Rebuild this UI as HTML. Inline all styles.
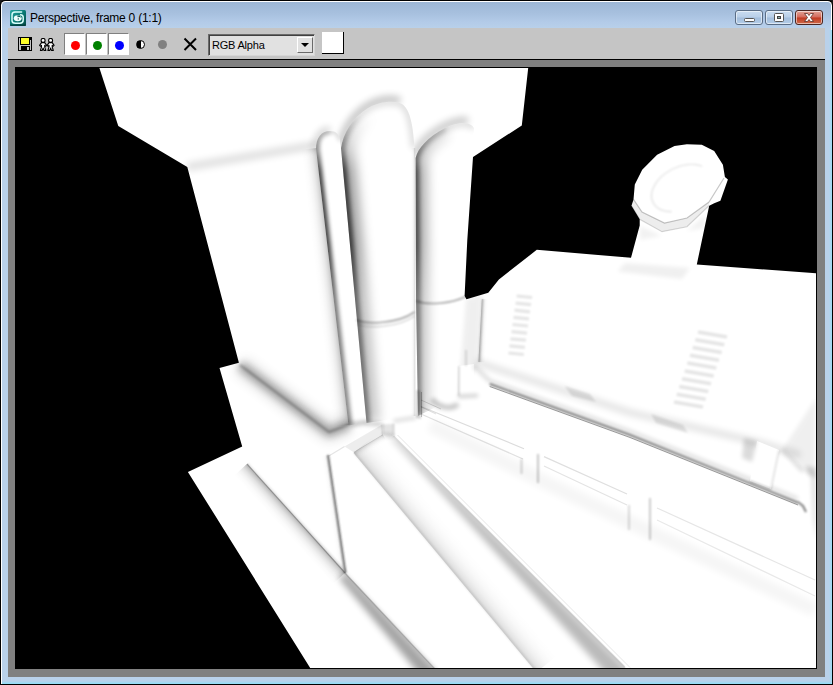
<!DOCTYPE html>
<html>
<head>
<meta charset="utf-8">
<title>Perspective, frame 0 (1:1)</title>
<style>
html,body{margin:0;padding:0;}
body{width:833px;height:685px;overflow:hidden;position:relative;background:#1a1a1a;font-family:"Liberation Sans",sans-serif;}
#win{position:absolute;left:0;top:0;width:833px;height:685px;background:#000;border-radius:5px 5px 1px 1px;overflow:hidden;}
#frame{position:absolute;left:1px;top:1px;width:831px;height:683px;background:#fff;border-radius:4.5px 4.5px 0 0;}
#glass{position:absolute;left:2px;top:2px;width:829px;height:681px;border-radius:3.5px 3.5px 0 0;
  background:linear-gradient(to bottom,#9db7d6 0px,#a7c0de 11px,#b3cbe8 20px,#b9d1ea 27px,#b9d1ea 100%);}
#glassr{position:absolute;left:829px;top:30px;width:3px;height:654px;background:linear-gradient(to right,#b9d1ea,#9bdcf5);}
#glassb{position:absolute;left:2px;top:681px;width:830px;height:3px;background:linear-gradient(to bottom,#b9d1ea,#8fe0f8);}
#appicon{position:absolute;left:10px;top:9.5px;width:16px;height:16px;}
#title{position:absolute;left:30px;top:11px;font-size:12px;line-height:14px;color:#000;white-space:nowrap;letter-spacing:-0.25px;}
.cbtn{position:absolute;top:10px;height:13px;width:26px;border:1px solid #5a6d85;border-radius:3px;
  background:linear-gradient(to bottom,#c9dcf0 0%,#b9cfe8 48%,#a3bedc 52%,#b4cde8 100%);box-shadow:inset 0 0 0 1px rgba(255,255,255,.55);}
#bclose{background:linear-gradient(to bottom,#e2a497 0%,#d4695a 48%,#c13a22 52%,#cf6a4a 100%);border-color:#4a2520;}
#client{position:absolute;left:8px;top:28px;width:817px;height:649px;background:#808080;}
#tb{position:absolute;left:0;top:0;width:817px;height:31px;background:#c5c5c5;border-bottom:1px solid #000;}
.sunk{position:absolute;background:#fff;border:1px solid;border-color:#808080 #fff #fff #808080;box-sizing:border-box;}
.dot{position:absolute;width:9px;height:9px;border-radius:50%;}
#combo{position:absolute;left:200px;top:6px;width:107px;height:22px;box-sizing:border-box;border:1px solid;border-color:#6a6a6a #d6d6d6 #d6d6d6 #6a6a6a;background:#e1e1e1;box-shadow:inset 1px 1px 0 #404040;}
#combo span{position:absolute;left:3px;top:3px;font-size:11px;line-height:14px;color:#000;letter-spacing:-0.2px;}
#cbtn{position:absolute;right:1px;top:2px;width:16px;height:16px;box-sizing:border-box;background:#e1e1e1;border:1px solid;border-color:#fff #6a6a6a #6a6a6a #fff;}
#cbtn:after{content:"";position:absolute;left:3px;top:5px;border:4px solid transparent;border-top:4px solid #000;border-bottom:0;}
#swatch{position:absolute;left:314px;top:4px;width:21px;height:21px;background:#fff;border-right:1px solid #000;border-bottom:1px solid #000;}
#img{position:absolute;left:7px;top:39px;width:802px;height:602px;background:#000;}
#img svg{position:absolute;left:1px;top:1px;}
</style>
</head>
<body>
<div id="win">
  <div id="frame"></div><div id="glass"></div><div id="glassr"></div><div id="glassb"></div>
  <svg id="appicon" viewBox="0 0 16 16">
    <defs><linearGradient id="ig" x1="0" y1="0" x2="1" y2="1"><stop offset="0" stop-color="#2aa8a2"/><stop offset="0.45" stop-color="#0b7f79"/><stop offset="1" stop-color="#034744"/></linearGradient></defs>
    <rect x="0" y="0" width="16" height="16" rx="1.5" fill="url(#ig)"/>
    <rect x="0" y="14.5" width="16" height="1.5" fill="#023a38" opacity="0.7"/>
    <path d="M11.600 2 L5 2 Q2 2 2 5 L2 10.400 Q2 13.200 5.400 13.200 L10 13.200 Q13.200 13.200 13.200 10 L13.200 7.200 Q13.200 4.900 10.600 4.700" fill="none" stroke="#d8fffc" stroke-width="1.500" stroke-linecap="round"/>
    <ellipse cx="7.700" cy="8.200" rx="3.900" ry="3" fill="#f0fffe"/>
    <path d="M7.400 5.600C9 5.200 10.800 6 11 7.800 10.200 6.900 9 6.800 8.100 7.300 7.400 7.600 7 6.600 7.400 5.600z" fill="#0b5e5a"/>
    <circle cx="8.300" cy="8.900" r="0.700" fill="#0a4744"/>
    <circle cx="7.900" cy="6.300" r="0.400" fill="#dff"/>
  </svg>
  <div id="title">Perspective, frame 0 (1:1)</div>
  <div class="cbtn" style="left:735px"><svg width="26" height="13" style="position:absolute;left:0;top:0"><rect x="8.5" y="7.5" width="10" height="3" rx="1" fill="#fff" stroke="#555" stroke-width="1"/></svg></div>
  <div class="cbtn" style="left:765px"><svg width="26" height="13" style="position:absolute;left:0;top:0"><rect x="8.500" y="2.5" width="9" height="8" rx="1" fill="#fff" stroke="#555" stroke-width="1"/><rect x="11.5" y="5.5" width="3" height="2" fill="#8aa" stroke="#444" stroke-width="1"/></svg></div>
  <div class="cbtn" id="bclose" style="left:795px"><svg width="26" height="13" style="position:absolute;left:0;top:0"><path d="M8.5 2.5h3l1.5 2 1.5-2h3l-3 4 3 4h-3l-1.500-2-1.500 2h-3l3-4z" fill="#fff" stroke="#5a3028" stroke-width="0.8"/></svg></div>
  <div id="client">
    <div id="tb">
      <!-- save icon -->
      <svg style="position:absolute;left:10px;top:9px" width="14" height="14" viewBox="0 0 14 14" shape-rendering="crispEdges">
        <rect x="0" y="0" width="14" height="14" fill="#000"/>
        <rect x="1" y="1" width="12" height="12" fill="#c5c5c5"/>
        <rect x="2" y="1" width="10" height="7" fill="#000"/>
        <rect x="3" y="1" width="8" height="6" fill="#ffff2a"/>
        <rect x="3" y="9" width="9" height="4" fill="#000"/>
        <rect x="9" y="10" width="2" height="3" fill="#c5c5c5"/>
        <rect x="12" y="1" width="1" height="2" fill="#000"/>
      </svg>
      <!-- people icon -->
      <svg style="position:absolute;left:31px;top:10px" width="16" height="13" viewBox="0 0 16 13">
        <g fill="#fff" stroke="#000" stroke-width="1.1" stroke-linejoin="round">
          <path d="M2.500 4.600 L0.600 7.400 L1.600 8.200 L2.500 7.300 L2.500 9 L1.400 12.400 L3.300 12.400 L4.100 10 L4.900 12.400 L6.800 12.400 L5.700 9 L5.700 7.300 L6.600 8.200 L7.600 7.400 L5.700 4.600 Z"/>
          <circle cx="4.100" cy="2.400" r="2"/>
          <path d="M10 4.600 L8.100 7.400 L9.100 8.200 L10 7.300 L10 9 L8.900 12.400 L10.800 12.400 L11.600 10 L12.400 12.400 L14.300 12.400 L13.200 9 L13.200 7.300 L14.100 8.200 L15.100 7.400 L13.200 4.600 Z"/>
          <circle cx="11.600" cy="2.400" r="2"/>
        </g>
      </svg>
      <div class="sunk" style="left:56px;top:5px;width:21px;height:22px"></div>
      <div class="sunk" style="left:78px;top:5px;width:21px;height:22px"></div>
      <div class="sunk" style="left:100px;top:5px;width:21px;height:22px"></div>
      <div class="dot" style="left:63px;top:13px;background:#f00"></div>
      <div class="dot" style="left:85px;top:13px;background:#008000"></div>
      <div class="dot" style="left:107px;top:13px;background:#00f"></div>
      <div class="dot" style="left:128px;top:12px;box-sizing:border-box;border:1px solid #000;background:linear-gradient(to right,#000 0,#000 50%,#fff 50%,#fff 100%)"></div>
      <div class="dot" style="left:150px;top:12px;background:#808080"></div>
      <svg style="position:absolute;left:175px;top:9px" width="15" height="15" viewBox="0 0 15 15"><path d="M1.500 1.500L13 13M13 1.500L1.500 13" stroke="#000" stroke-width="2" fill="none"/></svg>
      <div id="combo"><span>RGB Alpha</span><div id="cbtn"></div></div>
      <div id="swatch"></div>
    </div>
    <div id="img">
      <svg width="800" height="600" viewBox="16 68 800 600">
        <rect x="16" y="68" width="800" height="600" fill="#fff"/>
        <!--SCENE--><defs><filter id="b1" filterUnits="userSpaceOnUse" x="0" y="0" width="833" height="685"><feGaussianBlur stdDeviation="1"/></filter><filter id="b2" filterUnits="userSpaceOnUse" x="0" y="0" width="833" height="685"><feGaussianBlur stdDeviation="2"/></filter><filter id="b3" filterUnits="userSpaceOnUse" x="0" y="0" width="833" height="685"><feGaussianBlur stdDeviation="3.5"/></filter><filter id="b6" filterUnits="userSpaceOnUse" x="0" y="0" width="833" height="685"><feGaussianBlur stdDeviation="6"/></filter><clipPath id="cp1"><path d="M316,149 C316,138 321,131 330,131 C336,131 339.5,134 340,141 L366.500,423 L348.500,425.500 Z"/></clipPath><clipPath id="cp2"><path d="M341,148 C343,134 352,118 368,108 C380,101 395,100 402,104 C410,109 413,125 414.500,148 L414.800,416 L366.500,423 Z"/></clipPath><clipPath id="cp3"><path d="M415.600,158 C418,148 428,137 445,128 C458,122 470,121 474,128 L473,157 L466.700,240 L465,298 L458,396 L418,416 L416,300 Z"/></clipPath><linearGradient id="g1" gradientUnits="userSpaceOnUse" x1="316.6" y1="147.9" x2="301.1" y2="149.7"><stop offset="0.00" stop-color="#000" stop-opacity="0.240"/><stop offset="0.08" stop-color="#000" stop-opacity="0.192"/><stop offset="0.20" stop-color="#000" stop-opacity="0.132"/><stop offset="0.35" stop-color="#000" stop-opacity="0.079"/><stop offset="0.55" stop-color="#000" stop-opacity="0.036"/><stop offset="0.75" stop-color="#000" stop-opacity="0.012"/><stop offset="1.00" stop-color="#000" stop-opacity="0.000"/></linearGradient><linearGradient id="vg" gradientUnits="userSpaceOnUse" x1="0" y1="115" x2="0" y2="425"><stop offset="0" stop-color="#000" stop-opacity="0"/><stop offset="0.09" stop-color="#000" stop-opacity="0.45"/><stop offset="0.18" stop-color="#000" stop-opacity="1"/><stop offset="0.42" stop-color="#000" stop-opacity="1"/><stop offset="0.6" stop-color="#000" stop-opacity="0.72"/><stop offset="1" stop-color="#000" stop-opacity="0.62"/></linearGradient><linearGradient id="g2" gradientUnits="userSpaceOnUse" x1="415.1" y1="148.0" x2="410.5" y2="148.0"><stop offset="0.00" stop-color="#000" stop-opacity="0.150"/><stop offset="0.08" stop-color="#000" stop-opacity="0.120"/><stop offset="0.20" stop-color="#000" stop-opacity="0.083"/><stop offset="0.35" stop-color="#000" stop-opacity="0.050"/><stop offset="0.55" stop-color="#000" stop-opacity="0.022"/><stop offset="0.75" stop-color="#000" stop-opacity="0.007"/><stop offset="1.00" stop-color="#000" stop-opacity="0.000"/></linearGradient><linearGradient id="g3" gradientUnits="userSpaceOnUse" x1="247.4" y1="463.6" x2="234.4" y2="475.4"><stop offset="0.00" stop-color="#000" stop-opacity="0.340"/><stop offset="0.08" stop-color="#000" stop-opacity="0.272"/><stop offset="0.20" stop-color="#000" stop-opacity="0.187"/><stop offset="0.35" stop-color="#000" stop-opacity="0.112"/><stop offset="0.55" stop-color="#000" stop-opacity="0.051"/><stop offset="0.75" stop-color="#000" stop-opacity="0.017"/><stop offset="1.00" stop-color="#000" stop-opacity="0.000"/></linearGradient><linearGradient id="g4" gradientUnits="userSpaceOnUse" x1="246.6" y1="464.4" x2="250.0" y2="461.3"><stop offset="0.00" stop-color="#000" stop-opacity="0.220"/><stop offset="0.08" stop-color="#000" stop-opacity="0.176"/><stop offset="0.20" stop-color="#000" stop-opacity="0.121"/><stop offset="0.35" stop-color="#000" stop-opacity="0.073"/><stop offset="0.55" stop-color="#000" stop-opacity="0.033"/><stop offset="0.75" stop-color="#000" stop-opacity="0.011"/><stop offset="1.00" stop-color="#000" stop-opacity="0.000"/></linearGradient><clipPath id="h3"><polygon points="-270.8,-83.4 1051.8,1326.4 395.4,1942.1 -927.1,532.4"/></clipPath><linearGradient id="g5" gradientUnits="userSpaceOnUse" x1="345.4" y1="572.6" x2="341.4" y2="576.4"><stop offset="0.00" stop-color="#000" stop-opacity="0.250"/><stop offset="0.08" stop-color="#000" stop-opacity="0.200"/><stop offset="0.20" stop-color="#000" stop-opacity="0.138"/><stop offset="0.35" stop-color="#000" stop-opacity="0.083"/><stop offset="0.55" stop-color="#000" stop-opacity="0.037"/><stop offset="0.75" stop-color="#000" stop-opacity="0.013"/><stop offset="1.00" stop-color="#000" stop-opacity="0.000"/></linearGradient><linearGradient id="g6" gradientUnits="userSpaceOnUse" x1="344.6" y1="573.4" x2="348.6" y2="569.6"><stop offset="0.00" stop-color="#000" stop-opacity="0.150"/><stop offset="0.08" stop-color="#000" stop-opacity="0.120"/><stop offset="0.20" stop-color="#000" stop-opacity="0.083"/><stop offset="0.35" stop-color="#000" stop-opacity="0.050"/><stop offset="0.55" stop-color="#000" stop-opacity="0.022"/><stop offset="0.75" stop-color="#000" stop-opacity="0.007"/><stop offset="1.00" stop-color="#000" stop-opacity="0.000"/></linearGradient><linearGradient id="g7" gradientUnits="userSpaceOnUse" x1="328.6" y1="454.9" x2="321.1" y2="456.0"><stop offset="0.00" stop-color="#000" stop-opacity="0.140"/><stop offset="0.08" stop-color="#000" stop-opacity="0.112"/><stop offset="0.20" stop-color="#000" stop-opacity="0.077"/><stop offset="0.35" stop-color="#000" stop-opacity="0.046"/><stop offset="0.55" stop-color="#000" stop-opacity="0.021"/><stop offset="0.75" stop-color="#000" stop-opacity="0.007"/><stop offset="1.00" stop-color="#000" stop-opacity="0.000"/></linearGradient><clipPath id="h1"><polygon points="-243.3,-199.8 1261.9,1302.8 626.1,1939.8 -879.2,437.1"/></clipPath><linearGradient id="g8" gradientUnits="userSpaceOnUse" x1="394.0" y1="435.6" x2="390.8" y2="438.8"><stop offset="0.00" stop-color="#000" stop-opacity="0.150"/><stop offset="0.08" stop-color="#000" stop-opacity="0.120"/><stop offset="0.20" stop-color="#000" stop-opacity="0.083"/><stop offset="0.35" stop-color="#000" stop-opacity="0.050"/><stop offset="0.55" stop-color="#000" stop-opacity="0.022"/><stop offset="0.75" stop-color="#000" stop-opacity="0.007"/><stop offset="1.00" stop-color="#000" stop-opacity="0.000"/></linearGradient><linearGradient id="g9" gradientUnits="userSpaceOnUse" x1="353.5" y1="452.9" x2="374.0" y2="435.9"><stop offset="0.00" stop-color="#000" stop-opacity="0.180"/><stop offset="0.08" stop-color="#000" stop-opacity="0.144"/><stop offset="0.20" stop-color="#000" stop-opacity="0.099"/><stop offset="0.35" stop-color="#000" stop-opacity="0.059"/><stop offset="0.55" stop-color="#000" stop-opacity="0.027"/><stop offset="0.75" stop-color="#000" stop-opacity="0.009"/><stop offset="1.00" stop-color="#000" stop-opacity="0.000"/></linearGradient><linearGradient id="g10" gradientUnits="userSpaceOnUse" x1="382.7" y1="434.5" x2="386.6" y2="441.0"><stop offset="0.00" stop-color="#000" stop-opacity="0.200"/><stop offset="0.08" stop-color="#000" stop-opacity="0.160"/><stop offset="0.20" stop-color="#000" stop-opacity="0.110"/><stop offset="0.35" stop-color="#000" stop-opacity="0.066"/><stop offset="0.55" stop-color="#000" stop-opacity="0.030"/><stop offset="0.75" stop-color="#000" stop-opacity="0.010"/><stop offset="1.00" stop-color="#000" stop-opacity="0.000"/></linearGradient><linearGradient id="g11" gradientUnits="userSpaceOnUse" x1="481.8" y1="299.0" x2="488.4" y2="299.3"><stop offset="0.00" stop-color="#000" stop-opacity="0.220"/><stop offset="0.08" stop-color="#000" stop-opacity="0.176"/><stop offset="0.20" stop-color="#000" stop-opacity="0.121"/><stop offset="0.35" stop-color="#000" stop-opacity="0.073"/><stop offset="0.55" stop-color="#000" stop-opacity="0.033"/><stop offset="0.75" stop-color="#000" stop-opacity="0.011"/><stop offset="1.00" stop-color="#000" stop-opacity="0.000"/></linearGradient></defs>
<line x1="187.0" y1="167.0" x2="316.0" y2="145.0" stroke="#000" stroke-width="8.00" opacity="0.12" filter="url(#b3)"/>
<path d="M316,150 C316,138 321,130 330,130" fill="none" stroke="#000" stroke-width="7" opacity="0.16" filter="url(#b3)"/>
<path d="M341,146 C343,132 352,116 368,106 C380,99 392,98 400,101" fill="none" stroke="#000" stroke-width="8" opacity="0.22" filter="url(#b3)"/>
<path d="M415,156 C418,146 428,135 445,126 C455,121 462,120 468,121" fill="none" stroke="#000" stroke-width="8" opacity="0.20" filter="url(#b3)"/>
<polygon points="316.6,147.9 349.1,424.9 333.6,426.7 301.1,149.7" fill="url(#g1)"/>
<path d="M316,149 C316,138 321,131 330,131 C336,131 339.5,134 340,141 L366.500,423 L348.500,425.500 Z" fill="#fff"/>
<path d="M341,148 C343,134 352,118 368,108 C380,101 395,100 402,104 C410,109 413,125 414.500,148 L414.800,416 L366.500,423 Z" fill="#fff"/>
<path d="M415.600,158 C418,148 428,137 445,128 C458,122 470,121 474,128 L473,157 L466.700,240 L465,298 L458,396 L418,416 L416,300 Z" fill="#fff"/>
<g clip-path="url(#cp1)"><path d="M348.500,425.500 L316,149 C316,138 321,131 330,131" fill="none" stroke="url(#vg)" stroke-width="7" opacity="0.75" filter="url(#b2)"/><path d="M316,149 C316,138 321,131 330,131 C336,131 339.500,134 340,141" fill="none" stroke="#000" stroke-width="4" opacity="0.15" filter="url(#b2)"/></g>
<g clip-path="url(#cp2)"><path d="M366.500,423 L341,148 C343,134 352,118 368,108" fill="none" stroke="url(#vg)" stroke-width="26" opacity="0.36" filter="url(#b6)"/><path d="M366.500,423 L341,148 C343,134 352,118 368,108" fill="none" stroke="url(#vg)" stroke-width="8" opacity="0.62" filter="url(#b2)"/><path d="M341,148 C343,134 352,118 368,108 C380,101 395,100 402,104 C410,109 413,125 414.500,148" fill="none" stroke="#000" stroke-width="6" opacity="0.16" filter="url(#b3)"/></g>
<g clip-path="url(#cp3)"><path d="M418,416 L415.600,158 C418,148 428,137 445,128" fill="none" stroke="url(#vg)" stroke-width="22" opacity="0.32" filter="url(#b6)"/><path d="M418,416 L415.600,158 C418,148 428,137 445,128" fill="none" stroke="url(#vg)" stroke-width="7" opacity="0.55" filter="url(#b2)"/><path d="M415.600,158 C418,148 428,137 445,128 C458,122 470,121 474,128" fill="none" stroke="#000" stroke-width="6" opacity="0.16" filter="url(#b3)"/></g>
<polygon points="415.1,148.0 415.4,416.0 410.8,416.0 410.5,148.0" fill="url(#g2)"/>
<path d="M356.500,320 C366,324.500 398,324 414.500,312" fill="none" stroke="#000" stroke-width="1.600" opacity="0.35" filter="url(#b1)"/>
<path d="M357,324 C367,328.500 398,328 414.500,316" fill="none" stroke="#000" stroke-width="1.200" opacity="0.18" filter="url(#b1)"/>
<path d="M416.500,301 C428,305.500 450,304 466,296.500" fill="none" stroke="#000" stroke-width="1.600" opacity="0.35" filter="url(#b1)"/>
<polyline points="240.0,365.0 329.0,432.0 349.0,424.5" fill="none" stroke="#000" stroke-width="18.00" opacity="0.13" filter="url(#b6)" stroke-linejoin="round"/>
<polyline points="240.0,365.0 329.0,432.0 349.0,424.5" fill="none" stroke="#000" stroke-width="9.00" opacity="0.27" filter="url(#b3)" stroke-linejoin="round"/>
<polyline points="240.0,365.0 329.0,432.0 349.0,424.5" fill="none" stroke="#000" stroke-width="2.50" opacity="0.22" filter="url(#b1)" stroke-linejoin="round"/>
<line x1="349.0" y1="425.0" x2="367.0" y2="422.0" stroke="#000" stroke-width="4.00" opacity="0.25" filter="url(#b2)"/>
<polygon points="247.4,463.6 345.4,572.6 332.4,584.4 234.4,475.4" fill="url(#g3)"/>
<polygon points="246.6,464.4 344.6,573.4 348.0,570.3 250.0,461.3" fill="url(#g4)"/>
<polygon points="345.0,573.0 440.0,674.0 428.3,685.0 339.2,578.5" fill="#000" opacity="0.36" filter="url(#b3)" clip-path="url(#h3)"/>
<polygon points="345.4,572.6 436.4,669.6 432.4,673.4 341.4,576.4" fill="url(#g5)"/>
<polygon points="344.6,573.4 435.6,670.4 439.6,666.6 348.6,569.6" fill="url(#g6)"/>
<line x1="328.0" y1="455.0" x2="345.5" y2="573.0" stroke="#444" stroke-width="1.80" filter="url(#b1)" opacity="0.8"/>
<polygon points="328.6,454.9 346.1,572.9 338.6,574.0 321.1,456.0" fill="url(#g7)"/>
<polygon points="393.6,436.0 629.0,671.0 615.6,684.4 391.5,438.1" fill="#000" opacity="0.27" filter="url(#b3)" clip-path="url(#h1)"/>
<polygon points="394.0,435.6 625.4,666.6 622.2,669.8 390.8,438.8" fill="url(#g8)"/>
<polygon points="353.5,452.9 536.5,672.4 557.0,655.4 374.0,435.9" fill="url(#g9)"/>
<line x1="354.0" y1="452.5" x2="537.0" y2="672.0" stroke="#000" stroke-width="1.50" opacity="0.10" filter="url(#b1)"/>
<polygon points="382.2,424.5 344.5,446.4 354.2,452.6 383.0,435.0" fill="#000" opacity="0.07"/>
<polygon points="382.5,424.5 393.6,423.7 393.6,436.0 383.0,435.0" fill="#000" opacity="0.10" filter="url(#b1)"/>
<polygon points="382.7,434.5 353.7,452.1 357.6,458.6 386.6,441.0" fill="url(#g10)"/>
<line x1="383.0" y1="435.0" x2="393.6" y2="436.0" stroke="#000" stroke-width="3.00" opacity="0.18" filter="url(#b2)"/>
<line x1="382.6" y1="424.5" x2="383.0" y2="435.0" stroke="#000" stroke-width="1.50" opacity="0.15" filter="url(#b1)"/>
<line x1="393.6" y1="423.7" x2="393.6" y2="436.0" stroke="#000" stroke-width="1.50" opacity="0.15" filter="url(#b1)"/>
<line x1="366.0" y1="423.0" x2="382.5" y2="424.5" stroke="#000" stroke-width="4.00" opacity="0.20" filter="url(#b2)"/>
<line x1="344.5" y1="446.4" x2="328.8" y2="456.0" stroke="#000" stroke-width="1.20" opacity="0.10"/>
<line x1="397.5" y1="435.0" x2="630.0" y2="667.5" stroke="#000" stroke-width="1.00" opacity="0.10"/>
<polygon points="466.0,299.0 482.0,295.0 479.0,362.0 459.0,396.0 458.0,396.0" fill="#000" opacity="0.06" filter="url(#b2)"/>
<polygon points="481.8,299.0 478.4,362.0 485.0,362.3 488.4,299.3" fill="url(#g11)"/>
<line x1="482.4" y1="299.0" x2="479.0" y2="362.0" stroke="#000" stroke-width="1.20" opacity="0.25" filter="url(#b1)"/>
<path d="M432,399 C438,408 452,410 458,404" fill="none" stroke="#000" stroke-width="5" opacity="0.22" filter="url(#b2)"/>
<polygon points="459.0,366.0 474.0,364.0 474.0,394.0 459.0,396.0" fill="#fff" />
<line x1="459.0" y1="366.0" x2="459.0" y2="396.0" stroke="#000" stroke-width="1.50" opacity="0.18" filter="url(#b1)"/>
<line x1="458.0" y1="396.5" x2="478.0" y2="395.5" stroke="#000" stroke-width="3.00" opacity="0.22" filter="url(#b2)"/>
<line x1="466.0" y1="350.0" x2="466.0" y2="366.0" stroke="#000" stroke-width="2.00" opacity="0.12" filter="url(#b1)"/>
<line x1="417.5" y1="390.0" x2="417.5" y2="418.0" stroke="#000" stroke-width="1.20" opacity="0.4" filter="url(#b1)"/>
<line x1="421.5" y1="392.0" x2="421.5" y2="417.0" stroke="#000" stroke-width="1.00" opacity="0.22"/>
<line x1="421.0" y1="400.0" x2="441.0" y2="409.0" stroke="#000" stroke-width="1.00" opacity="0.15"/>
<line x1="421.0" y1="407.0" x2="436.0" y2="414.0" stroke="#000" stroke-width="1.00" opacity="0.12"/>
<line x1="393.5" y1="421.0" x2="416.5" y2="417.5" stroke="#000" stroke-width="3.00" opacity="0.16" filter="url(#b2)"/>
<polyline points="476.0,362.0 630.0,412.5 761.0,443.0 800.0,455.0" fill="none" stroke="#000" stroke-width="5.00" opacity="0.14" filter="url(#b3)"/>
<polyline points="489.7,384.0 630.0,435.0 798.0,502.7" fill="none" stroke="#000" stroke-width="2.00" opacity="0.5" filter="url(#b1)"/>
<polyline points="489.7,386.5 630.0,437.5 798.0,505.0" fill="none" stroke="#000" stroke-width="1.00" opacity="0.35"/>
<polyline points="474.0,366.0 489.7,381.0 630.0,431.5 798.0,499.0" fill="none" stroke="#000" stroke-width="4.00" opacity="0.13" filter="url(#b2)"/>
<polygon points="564.5,386.0 590.0,394.0 596.0,402.0 572.0,396.0" fill="#000" opacity="0.10" filter="url(#b1)"/>
<polygon points="651.0,414.0 683.0,425.0 688.0,433.0 656.0,423.0" fill="#000" opacity="0.10" filter="url(#b1)"/>
<line x1="516.6" y1="296.0" x2="532.1" y2="297.5" stroke="#000" stroke-width="3.20" opacity="0.10" filter="url(#b1)"/>
<line x1="515.6" y1="303.1" x2="531.1" y2="304.6" stroke="#000" stroke-width="3.20" opacity="0.10" filter="url(#b1)"/>
<line x1="514.5" y1="310.2" x2="530.0" y2="311.8" stroke="#000" stroke-width="3.20" opacity="0.10" filter="url(#b1)"/>
<line x1="513.5" y1="317.4" x2="529.0" y2="318.9" stroke="#000" stroke-width="3.20" opacity="0.10" filter="url(#b1)"/>
<line x1="512.5" y1="324.5" x2="528.0" y2="326.0" stroke="#000" stroke-width="3.20" opacity="0.10" filter="url(#b1)"/>
<line x1="511.5" y1="331.6" x2="527.0" y2="333.1" stroke="#000" stroke-width="3.20" opacity="0.10" filter="url(#b1)"/>
<line x1="510.4" y1="338.8" x2="526.0" y2="340.2" stroke="#000" stroke-width="3.20" opacity="0.10" filter="url(#b1)"/>
<line x1="509.4" y1="345.9" x2="524.9" y2="347.4" stroke="#000" stroke-width="3.20" opacity="0.10" filter="url(#b1)"/>
<line x1="508.4" y1="353.0" x2="523.9" y2="354.5" stroke="#000" stroke-width="3.20" opacity="0.10" filter="url(#b1)"/>
<line x1="698.0" y1="332.0" x2="727.0" y2="337.0" stroke="#000" stroke-width="3.60" opacity="0.10" filter="url(#b1)"/>
<line x1="695.3" y1="339.8" x2="724.3" y2="344.8" stroke="#000" stroke-width="3.60" opacity="0.10" filter="url(#b1)"/>
<line x1="692.7" y1="347.6" x2="721.7" y2="352.6" stroke="#000" stroke-width="3.60" opacity="0.10" filter="url(#b1)"/>
<line x1="690.0" y1="355.3" x2="719.0" y2="360.3" stroke="#000" stroke-width="3.60" opacity="0.10" filter="url(#b1)"/>
<line x1="687.3" y1="363.1" x2="716.3" y2="368.1" stroke="#000" stroke-width="3.60" opacity="0.10" filter="url(#b1)"/>
<line x1="684.7" y1="370.9" x2="713.7" y2="375.9" stroke="#000" stroke-width="3.60" opacity="0.10" filter="url(#b1)"/>
<line x1="682.0" y1="378.7" x2="711.0" y2="383.7" stroke="#000" stroke-width="3.60" opacity="0.10" filter="url(#b1)"/>
<line x1="679.3" y1="386.4" x2="708.3" y2="391.4" stroke="#000" stroke-width="3.60" opacity="0.10" filter="url(#b1)"/>
<line x1="676.7" y1="394.2" x2="705.7" y2="399.2" stroke="#000" stroke-width="3.60" opacity="0.10" filter="url(#b1)"/>
<line x1="674.0" y1="402.0" x2="703.0" y2="407.0" stroke="#000" stroke-width="3.60" opacity="0.10" filter="url(#b1)"/>
<polygon points="816.0,398.0 782.0,450.0 800.0,470.0 816.0,476.0" fill="#000" opacity="0.06" filter="url(#b2)"/>
<polygon points="806.0,466.0 816.0,468.0 816.0,478.0 808.0,475.0" fill="#000" opacity="0.16" filter="url(#b2)"/>
<polygon points="811.0,476.0 816.0,474.0 816.0,540.0 813.0,520.0" fill="#000" opacity="0.12" filter="url(#b2)"/>
<line x1="782.0" y1="450.0" x2="803.0" y2="472.0" stroke="#000" stroke-width="3.00" opacity="0.10" filter="url(#b2)"/>
<polygon points="757.0,441.0 779.0,450.0 771.0,489.0 750.0,481.0" fill="#fff" />
<polygon points="744.0,438.0 757.0,441.0 752.0,462.0 742.0,458.0" fill="#000" opacity="0.14" filter="url(#b2)"/>
<line x1="779.0" y1="450.0" x2="771.0" y2="489.0" stroke="#000" stroke-width="2.00" opacity="0.10" filter="url(#b1)"/>
<line x1="750.0" y1="481.0" x2="771.0" y2="489.0" stroke="#000" stroke-width="1.50" opacity="0.25" filter="url(#b1)"/>
<polyline points="798.0,502.0 803.0,506.0 806.0,512.0" fill="none" stroke="#000" stroke-width="2.00" opacity="0.5" filter="url(#b1)"/>
<polyline points="420.0,391.0 420.0,419.0" fill="none" stroke="#000" stroke-width="1.50" opacity="0.25" filter="url(#b1)"/>
<polyline points="421.0,406.5 524.0,448.7" fill="none" stroke="#000" stroke-width="1.20" opacity="0.14"/>
<polyline points="421.0,414.0 523.0,459.0" fill="none" stroke="#000" stroke-width="1.20" opacity="0.12"/>
<polyline points="521.5,459.0 521.5,474.0" fill="none" stroke="#000" stroke-width="1.50" opacity="0.22" filter="url(#b1)"/>
<polyline points="538.0,454.0 538.0,483.0" fill="none" stroke="#000" stroke-width="2.00" opacity="0.22" filter="url(#b1)"/>
<polyline points="544.0,456.6 627.0,494.0" fill="none" stroke="#000" stroke-width="1.20" opacity="0.13"/>
<polyline points="544.0,466.0 627.0,505.0" fill="none" stroke="#000" stroke-width="1.20" opacity="0.11"/>
<polyline points="629.0,505.0 629.0,530.0" fill="none" stroke="#000" stroke-width="1.50" opacity="0.2" filter="url(#b1)"/>
<polyline points="650.0,498.0 650.0,540.0" fill="none" stroke="#000" stroke-width="2.00" opacity="0.2" filter="url(#b1)"/>
<polyline points="657.0,508.0 815.0,580.0" fill="none" stroke="#000" stroke-width="1.20" opacity="0.10"/>
<polyline points="657.0,520.0 815.0,596.0" fill="none" stroke="#000" stroke-width="1.20" opacity="0.09"/>
<polyline points="430.0,425.0 540.0,480.0 815.0,610.0" fill="none" stroke="#000" stroke-width="14.00" opacity="0.035" filter="url(#b3)"/>
<path d="M633.500,199.400 L642,212 L664.500,223 L687,218 L709,202 L724,178" fill="none" stroke="#000" stroke-width="1.200" opacity="0.22"/>
<path d="M631.500,205.700 L639.700,219.300 L662,231.700 L687,226.800 L709,205.700" fill="none" stroke="#000" stroke-width="1.200" opacity="0.15"/>
<polygon points="631.5,205.7 639.7,219.3 662.0,231.7 687.0,226.8 709.0,205.7 709.0,202.0 687.0,218.0 664.5,223.0 642.0,212.0 633.5,199.4" fill="#000" opacity="0.07"/>
<ellipse cx="681.500" cy="188" rx="32" ry="21" transform="rotate(-27 681.500 188)" fill="none" stroke="#000" stroke-width="1.200" opacity="0.13" stroke-dasharray="0 62 95 300" filter="url(#b1)"/>
<polygon points="640.0,226.0 662.0,236.0 687.0,231.0 706.0,214.0 704.0,228.0 640.0,240.0" fill="#000" opacity="0.05" filter="url(#b2)"/>
<polygon points="617.5,271.5 625.0,263.0 690.0,268.0 682.0,279.0" fill="#000" opacity="0.06" filter="url(#b2)"/>
<polygon points="16.0,68.0 99.4,68.0 118.3,126.0 187.3,167.0 238.9,362.7 219.5,368.0 242.2,446.5 187.9,471.9 310.2,668.0 16.0,668.0" fill="#000" />
<polygon points="528.2,68.0 521.8,125.5 473.0,157.0 467.3,240.0 464.6,296.0 466.5,299.3 488.3,292.7 498.9,279.5 536.8,249.8 631.0,257.8 639.7,225.5 639.7,219.3 631.5,205.7 633.5,199.4 634.8,184.5 642.2,169.7 657.1,154.8 674.5,146.1 686.9,144.3 701.8,144.8 714.2,151.0 722.9,164.7 724.9,177.1 727.9,179.6 720.4,200.7 714.2,203.2 709.2,205.7 696.8,264.5 816.0,273.3 816.0,68.0" fill="#000" /><!--/SCENE-->
      </svg>
    </div>
  </div>
</div>
</body>
</html>
